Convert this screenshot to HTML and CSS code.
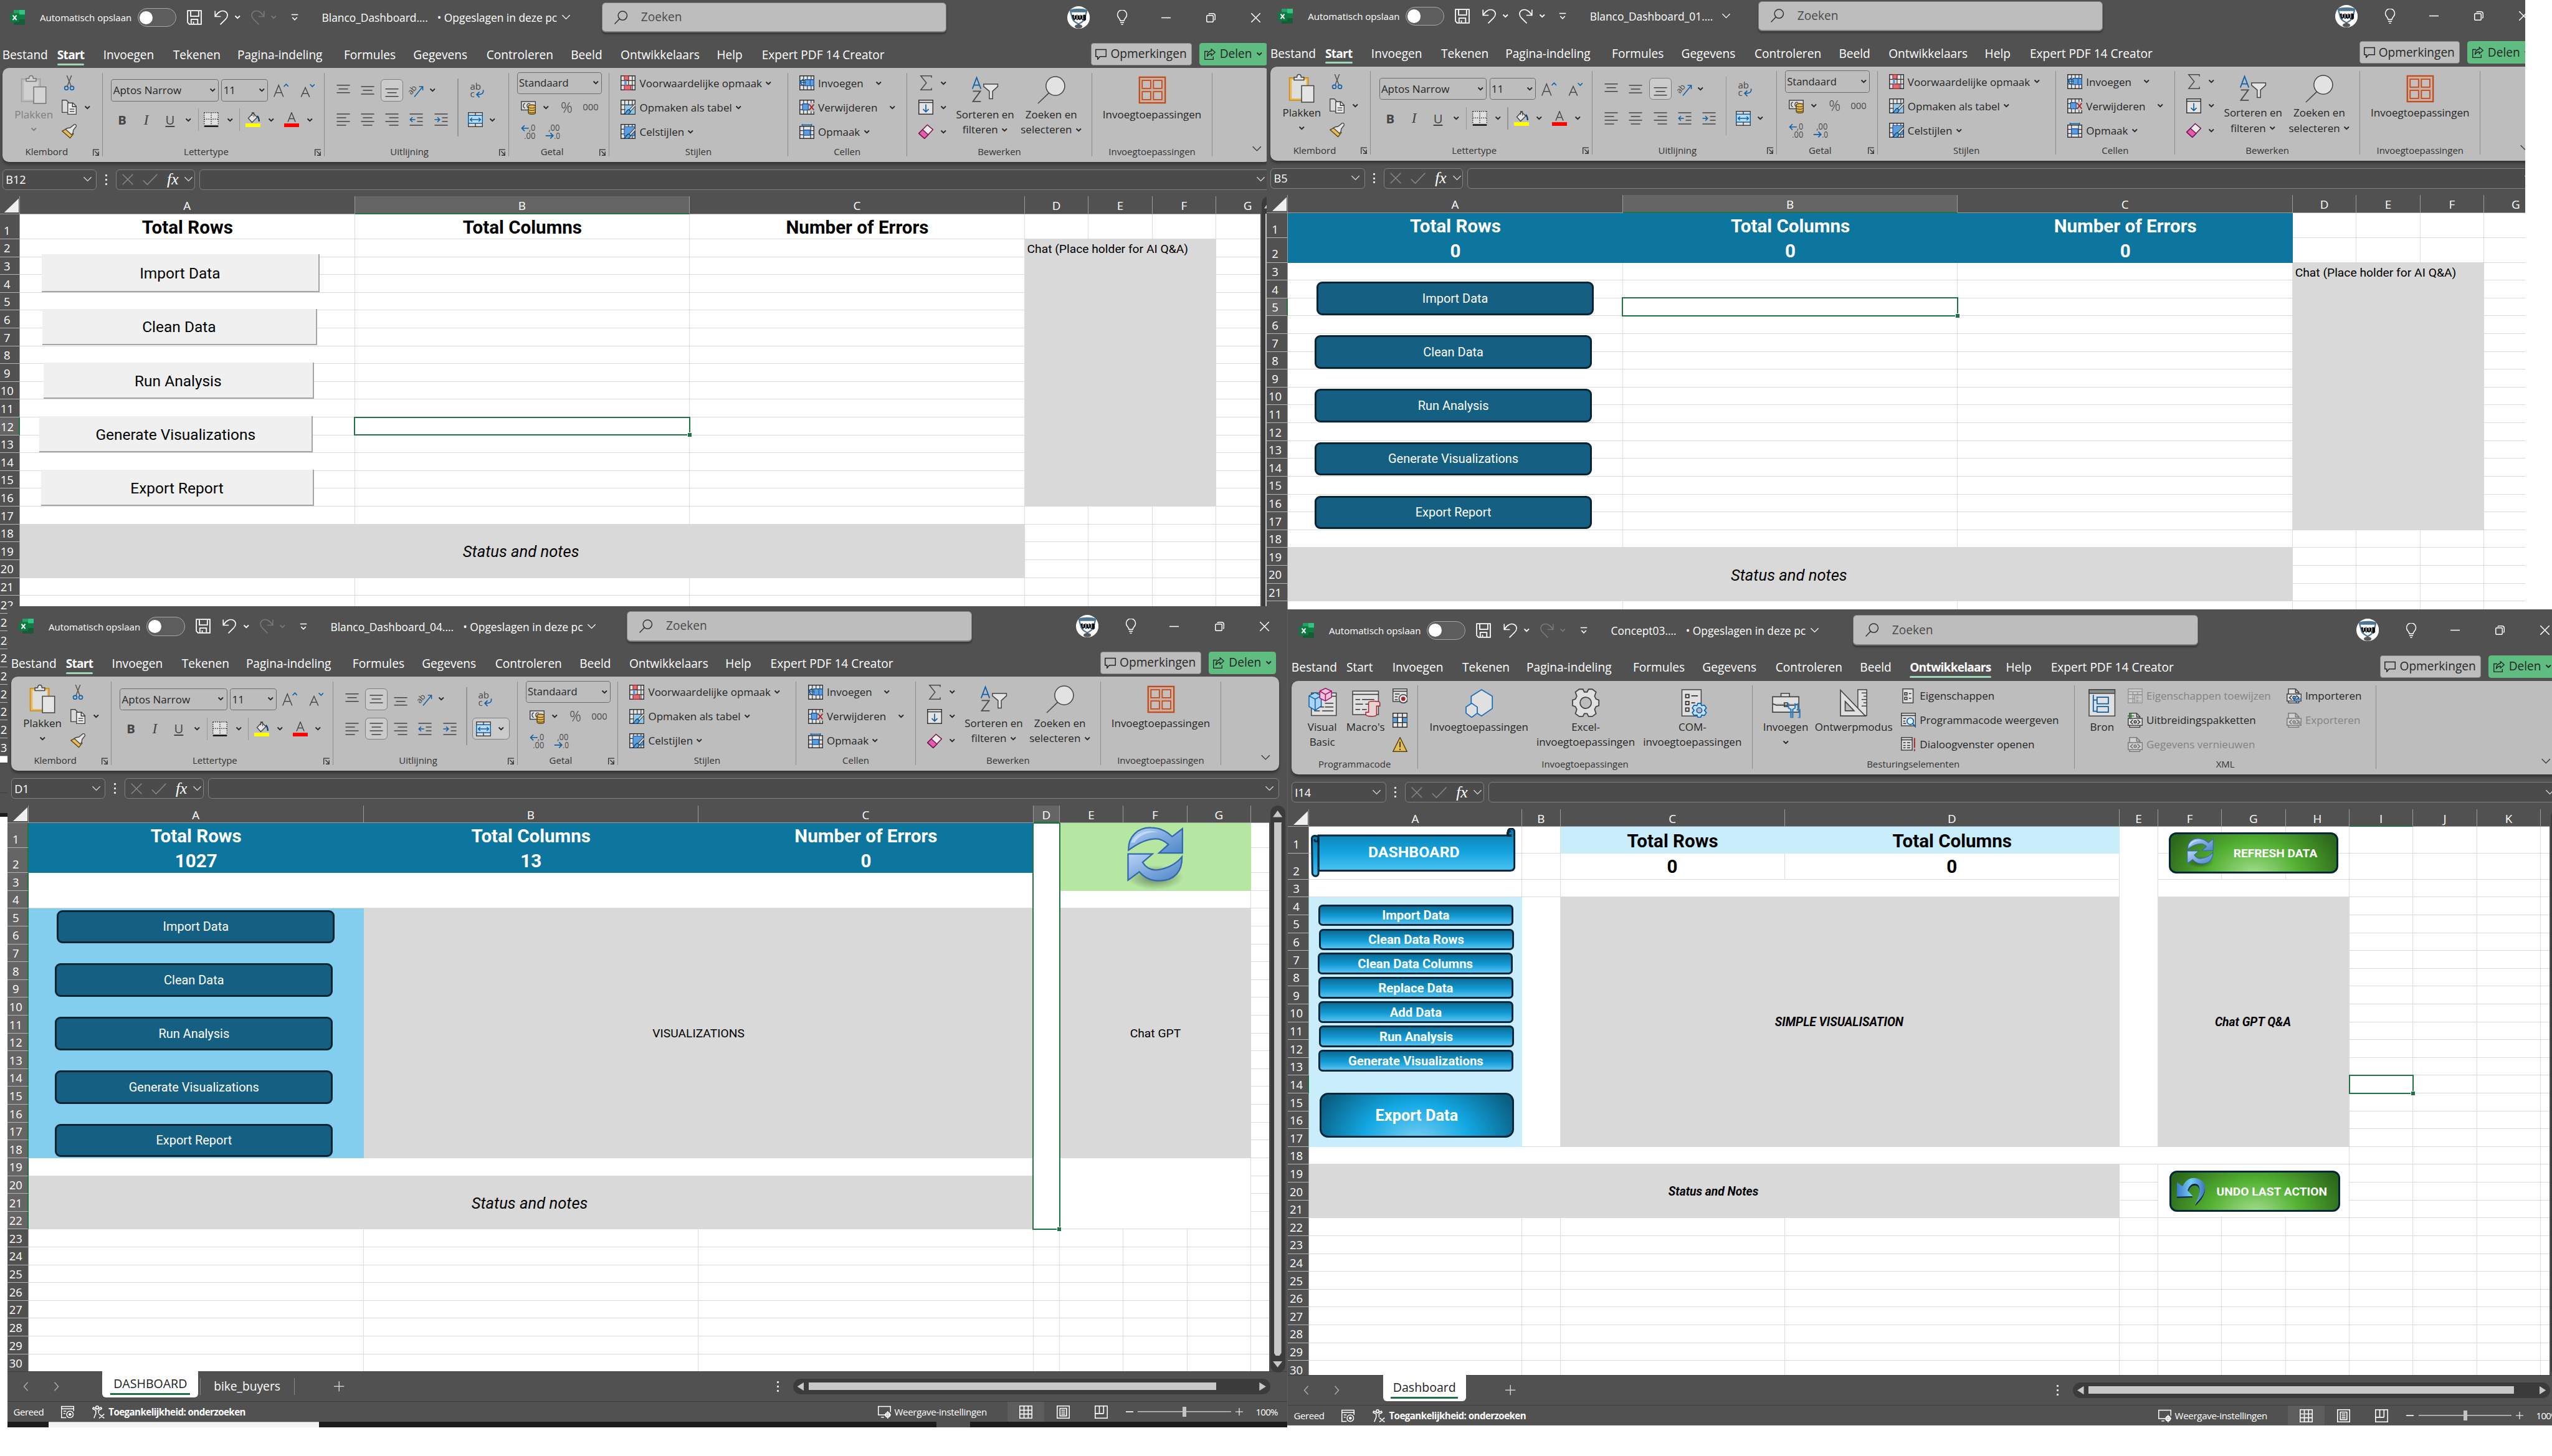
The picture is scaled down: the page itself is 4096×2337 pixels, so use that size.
FILE: index.html
```html
<!DOCTYPE html>
<html lang="nl">
<head>
<meta charset="utf-8">
<title>Dashboards</title>
<link rel="stylesheet" href="styles.css">
</head>
<body>

<svg class="sprites" aria-hidden="true">
  <defs>
    <linearGradient id="g-arrow" x1="0" y1="0" x2="1" y2="1"><stop offset="0" stop-color="#b9d4f6"/><stop offset=".5" stop-color="#7fa9dd"/><stop offset="1" stop-color="#4f86c8"/></linearGradient>
    <linearGradient id="g-undo" x1="0" y1="0" x2="1" y2="0"><stop offset="0" stop-color="#3d79c9"/><stop offset=".5" stop-color="#74cdf7"/><stop offset="1" stop-color="#3f74bd"/></linearGradient>
    <linearGradient id="g-scroll" x1="0" y1="0" x2="0" y2="1"><stop offset="0" stop-color="#0c7aa8"/><stop offset=".55" stop-color="#13a3df"/><stop offset="1" stop-color="#4cc2f1"/></linearGradient>
    <radialGradient id="g-shade"><stop offset="0" stop-color="#000" stop-opacity=".45"/><stop offset="1" stop-color="#000" stop-opacity="0"/></radialGradient>
  </defs>
  <symbol id="excel" viewBox="0 0 32 32"><path fill="#21a366" d="M8 0h24v10H8z"/><path fill="#33c481" d="M20 0h11a1 1 0 0 1 1 1v9H20z"/><path fill="#107c41" d="M8 10h24v10H8z"/><path fill="#185c37" d="M8 20h24v11a1 1 0 0 1-1 1H9a1 1 0 0 1-1-1z"/><rect y="7" width="20" height="19" rx="2" fill="#0f7a40"/><path d="M6 11.500l8 10M14 11.500l-8 10" stroke="#fff" stroke-width="2.600" fill="none"/></symbol>
  <symbol id="save" viewBox="0 0 32 32"><path d="M1.500 1.500h29v29H5l-3.500-4z M8 1.500v12h17v-12 M9 30V20h14v10 M14 30v-5" fill="none" stroke="currentColor" stroke-width="2.400"/></symbol>
  <symbol id="undo" viewBox="0 0 32 32"><path d="M3 2v12h12M3.500 13.500C9 4 17 0 24 3c7 4 7 11 1 17L14 31" fill="none" stroke="currentColor" stroke-width="2.200"/></symbol>
  <symbol id="redo" viewBox="0 0 32 32"><path d="M29 2v12H17M28.500 13.500C23 4 15 0 8 3c-7 4-7 11-1 17l11 11" fill="none" stroke="currentColor" stroke-width="2.200"/></symbol>
  <symbol id="customize" viewBox="0 0 16 16"><path d="M1 2h14M3 8l5 5 5-5" fill="none" stroke="currentColor" stroke-width="2.200"/></symbol>
  <symbol id="chev" viewBox="0 0 14 10"><path d="M2 2l5 5 5-5" fill="none" stroke="currentColor" stroke-width="2.400"/></symbol>
  <symbol id="chevbig" viewBox="0 0 24 16"><path d="M2 2l10 10L22 2" fill="none" stroke="currentColor" stroke-width="2"/></symbol>
  <symbol id="lens" viewBox="0 0 32 32"><circle cx="19" cy="12" r="9.500" fill="none" stroke="currentColor" stroke-width="2"/><path d="M12.500 19L2 30" stroke="currentColor" stroke-width="2"/></symbol>
  <symbol id="avatar" viewBox="0 0 48 48"><circle cx="24" cy="24" r="24" fill="#fff"/><path d="M5 8c10-4 28-4 38 0l-1 5H6z" fill="#4e7590"/><path d="M7 12l4 14c2 6 7 9 13 12 6-3 11-6 13-12l4-14" fill="none" stroke="#4e7590" stroke-width="3"/><path d="M10 19l4-1 3 2 4-2 3 2 4-2 3 2 4-2 5 1v10l-4 3-1-3-3 1-2-3-3 3-3-2-3 2-3-3-3 3-3-3z" fill="#0c0f14"/><path d="M15 17v9M21 19v9M27 17v9M33 19v9" stroke="#fff" stroke-width="1.400"/><ellipse cx="24" cy="43" rx="8" ry="4.500" fill="#111" opacity=".7"/></symbol>
  <symbol id="bulb" viewBox="0 0 32 32"><path d="M12 23c0-5-6-6-6-13a10 10 0 0 1 20 0c0 7-6 8-6 13zM12 27h8M14 31h4" fill="none" stroke="currentColor" stroke-width="2"/></symbol>
  <symbol id="minimize" viewBox="0 0 20 20"><path d="M0 10h20" stroke="currentColor" stroke-width="2"/></symbol>
  <symbol id="restore" viewBox="0 0 20 20"><rect x="1" y="5" width="14" height="14" rx="2" fill="none" stroke="currentColor" stroke-width="2"/><path d="M5 2.500C6 1 7 1 9 1h5c3 0 5 2 5 5v6c0 1 0 2-1.500 3" fill="none" stroke="currentColor" stroke-width="2"/></symbol>
  <symbol id="close" viewBox="0 0 20 20"><path d="M0 0l20 20M20 0L0 20" stroke="currentColor" stroke-width="2"/></symbol>
  <symbol id="comment" viewBox="0 0 24 24"><path d="M1 2h22v15H10l-5 6v-6H1z" fill="none" stroke="currentColor" stroke-width="2"/></symbol>
  <symbol id="share" viewBox="0 0 24 24"><path d="M8 6H1v17h18v-6M15 1l8 7-8 7v-4c-5 0-7 2-9 6 0-7 3-11 9-12z" fill="none" stroke="currentColor" stroke-width="1.800"/></symbol>

  <symbol id="paste" viewBox="0 0 64 64"><path class="clip" d="M6 9h40v48H6z" fill="#e9b955" stroke="#c68a1e" stroke-width="2"/><path d="M11 13h31v40H11z" fill="#dedede"/><path d="M16 14v-6h6c0-8 9-8 9 0h6v6z" fill="#e4e4e4" stroke="#444" stroke-width="2"/><path d="M32 26h26v35H32z" fill="#e4e4e4" stroke="#444" stroke-width="2"/></symbol>
  <symbol id="cut" viewBox="0 0 32 32"><path d="M11 0l9 23M21 0l-9 23" stroke="#555" stroke-width="2" fill="none"/><circle cx="10" cy="27" r="4" fill="none" stroke="#0f5fa8" stroke-width="2.200"/><circle cx="22" cy="27" r="4" fill="none" stroke="#0f5fa8" stroke-width="2.200"/></symbol>
  <symbol id="copy" viewBox="0 0 32 32"><path d="M1 1h9l4 4v22H1z" fill="#dadada" stroke="#444" stroke-width="1.800"/><path d="M13 7h11l7 7v17H13z" fill="#ececec" stroke="#444" stroke-width="1.800"/><path d="M23 7v8h8M17 20h10M17 25h10" fill="none" stroke="#333" stroke-width="1.800"/></symbol>
  <symbol id="brush" viewBox="0 0 32 32"><path d="M1 15l12-6 12 12-7 9z" fill="#e9bd55" stroke="#5a4210" stroke-width="1.800"/><path d="M8 11l4-2 6-1L28 0l4 4-7 9-1 6-3 4z" fill="#e4e4e4" stroke="#444" stroke-width="1.800"/></symbol>
  <symbol id="grow" viewBox="0 0 32 32"><path d="M1 30L11 5l10 25M4.500 21h13" fill="none" stroke="#4a4a4a" stroke-width="2"/><path d="M22 8l5-5 5 5" fill="none" stroke="#0f5fa8" stroke-width="2.200"/></symbol>
  <symbol id="shrink" viewBox="0 0 32 32"><path d="M3 30l9-20 9 20M6 23h12" fill="none" stroke="#4a4a4a" stroke-width="2"/><path d="M22 3l5 5 5-5" fill="none" stroke="#0f5fa8" stroke-width="2.200"/></symbol>
  <symbol id="border" viewBox="0 0 32 32"><path d="M1 1h30v26H1z" fill="#e0e0e0"/><path d="M1 1h30M1 1v27M31 1v27M16 1v27M1 15h30" stroke="#333" stroke-width="2" stroke-dasharray="2 2.500" fill="none"/><path d="M1 30h30" stroke="#000" stroke-width="3"/></symbol>
  <symbol id="bucket" viewBox="0 0 32 32"><path d="M6 13L16 2l9 9-11 11z" fill="#e4e4e4" stroke="#444" stroke-width="1.800"/><path d="M14 8V1h4v9" stroke="#444" stroke-width="1.600" fill="none"/><path d="M25 8c3 3 4 7 4 12" stroke="#0b3d6b" stroke-width="3" fill="none"/><path d="M0 24h32v8H0z" fill="#ff0"/></symbol>
  <symbol id="fontcolor" viewBox="0 0 32 32"><path d="M8 21L16 1l8 20M11 14h10" fill="none" stroke="#4a4a4a" stroke-width="2"/><path d="M0 24h32v8H0z" fill="#f00"/></symbol>
  <symbol id="al-top" viewBox="0 0 32 32"><path d="M2 5h28M6 13h20M2 21h28" stroke="#444" stroke-width="2"/></symbol>
  <symbol id="al-mid" viewBox="0 0 32 32"><path d="M2 8h28M6 16h20M2 24h28" stroke="#444" stroke-width="2"/></symbol>
  <symbol id="al-bot" viewBox="0 0 32 32"><path d="M2 13h28M6 21h20M2 29h28" stroke="#444" stroke-width="2"/></symbol>
  <symbol id="orient" viewBox="0 0 32 32"><text x="-1" y="19" font-size="17" transform="rotate(-50 10 16)" fill="#4a4a4a">ab</text><path d="M12 30L30 8M22 8h8v8" fill="none" stroke="#0f5fa8" stroke-width="2"/></symbol>
  <symbol id="left" viewBox="0 0 32 32"><path d="M2 4h28M2 12h20M2 20h28M2 28h20" stroke="#444" stroke-width="2"/></symbol>
  <symbol id="center" viewBox="0 0 32 32"><path d="M2 4h28M6 12h20M2 20h28M6 28h20" stroke="#444" stroke-width="2"/></symbol>
  <symbol id="right" viewBox="0 0 32 32"><path d="M2 4h28M10 12h20M2 20h28M10 28h20" stroke="#444" stroke-width="2"/></symbol>
  <symbol id="outdent" viewBox="0 0 32 32"><path d="M2 4h28M18 12h12M18 20h12M2 28h28" stroke="#444" stroke-width="2"/><path d="M14 16H3M8 11l-5 5 5 5" fill="none" stroke="#0f5fa8" stroke-width="2"/></symbol>
  <symbol id="indent" viewBox="0 0 32 32"><path d="M2 4h28M18 12h12M18 20h12M2 28h28" stroke="#444" stroke-width="2"/><path d="M2 16h11M8 11l5 5-5 5" fill="none" stroke="#0f5fa8" stroke-width="2"/></symbol>
  <symbol id="wrap" viewBox="0 0 32 32"><text x="2" y="14" font-size="20" fill="#4a4a4a">ab</text><text x="2" y="31" font-size="20" fill="#4a4a4a">c</text><path d="M30 15c1 9-5 10-13 10M22 19l-6 6 6 6" fill="none" stroke="#0f5fa8" stroke-width="2.200"/></symbol>
  <symbol id="merge" viewBox="0 0 32 32"><path d="M1 1h30v30H1z" fill="#e0e0e0" stroke="#444" stroke-width="2"/><path d="M1 7h30v17H1z" fill="#b9dcf5" stroke="#0f5fa8" stroke-width="2"/><path d="M16 1v6M16 24v7" stroke="#444" stroke-width="2"/><path d="M5 16h22M9 12l-4 4 4 4M23 12l4 4-4 4" fill="none" stroke="#0f5fa8" stroke-width="2"/></symbol>
  <symbol id="money" viewBox="0 0 32 32"><path d="M1 4h30v18H1z" fill="#dedede" stroke="#444" stroke-width="2"/><path d="M9 8c-5 1-5 9 0 10M20 9c-4-2-7 0-7 4s3 6 7 4" fill="none" stroke="#444" stroke-width="1.800"/><path d="M16 14c0-4 15-4 15 0v14c0 4-15 4-15 0z" fill="#e9bd55" stroke="#5a4210" stroke-width="1.800"/><path d="M16 15c0 4 15 4 15 0M16 20c0 4 15 4 15 0M16 25c0 4 15 4 15 0" fill="none" stroke="#5a4210" stroke-width="1.500"/></symbol>
  <symbol id="thousand" viewBox="0 0 32 32"><text x="-1" y="22" font-size="19.500" textLength="34" lengthAdjust="spacingAndGlyphs" fill="#4a4a4a">000</text></symbol>
  <symbol id="incdec" viewBox="0 0 32 32"><text x="17" y="15" font-size="18" textLength="14" lengthAdjust="spacingAndGlyphs" fill="#4a4a4a">,0</text><text x="7" y="32" font-size="18" textLength="24" lengthAdjust="spacingAndGlyphs" fill="#4a4a4a">,00</text><path d="M17 9H2M8 3L2 9l6 6" fill="none" stroke="#0f5fa8" stroke-width="2.200"/></symbol>
  <symbol id="decdec" viewBox="0 0 32 32"><text x="7" y="14" font-size="18" textLength="24" lengthAdjust="spacingAndGlyphs" fill="#4a4a4a">,00</text><text x="19" y="32" font-size="18" textLength="13" lengthAdjust="spacingAndGlyphs" fill="#4a4a4a">,0</text><path d="M1 25h16M11 19l6 6-6 6" fill="none" stroke="#0f5fa8" stroke-width="2.200"/></symbol>
  <symbol id="gridbase" viewBox="0 0 32 32"><path d="M1 1h30v30H1z" fill="#e4e4e4" stroke="#333" stroke-width="2"/><path d="M1 11h30M1 21h30M9 1v30M17 1v30M25 1v30" stroke="#333" stroke-width="1.600"/></symbol>
  <symbol id="cond" viewBox="0 0 32 32"><use href="#gridbase" width="32" height="32"/><path d="M8 1h9v9H8zM8 21h14v10H8z" fill="#e36a72" stroke="#9c2a30" stroke-width="1.600"/><path d="M8 11h5v10H8z" fill="#5b9bd5"/></symbol>
  <symbol id="fmttable" viewBox="0 0 32 32"><use href="#gridbase" width="32" height="32"/><path d="M10 12h20v18H10z" fill="#8cc8ef"/><path d="M31 8L18 22l3 3L32 13z" fill="#e4e4e4" stroke="#444" stroke-width="1.500"/><path d="M18 21c-6 0-4 7-10 9 6 3 13 0 13-5z" fill="#5aa0dd" stroke="#0b3d6b" stroke-width="1.600"/></symbol>
  <symbol id="cellstyle" viewBox="0 0 32 32"><use href="#gridbase" width="32" height="32"/><path d="M8 6h22v19H8z" fill="#5b9fdc" stroke="#2255a4" stroke-width="1.600"/><path d="M31 8L18 22l3 3L32 13z" fill="#e4e4e4" stroke="#444" stroke-width="1.500"/><path d="M18 21c-6 0-4 7-10 9 6 3 13 0 13-5z" fill="#5aa0dd" stroke="#0b3d6b" stroke-width="1.600"/></symbol>
  <symbol id="insert" viewBox="0 0 32 32"><use href="#gridbase" width="32" height="32"/><path d="M12 9h19v13H12z" fill="#5b9fdc" stroke="#2255a4" stroke-width="1.800"/><path d="M23 9v13" stroke="#2255a4" stroke-width="1.600"/><path d="M14 15H1M8 8l-7 7 7 7" fill="none" stroke="#0f5fa8" stroke-width="2.400"/></symbol>
  <symbol id="delete" viewBox="0 0 32 32"><use href="#gridbase" width="32" height="32"/><path d="M21 7h11v18H21z" fill="#bdbdbd"/><path d="M7 9h12v13H7z" fill="#5b9fdc" stroke="#2255a4" stroke-width="1.800"/><path d="M21 10l10 12M31 10L21 22" stroke="#a4262c" stroke-width="2.400"/></symbol>
  <symbol id="format" viewBox="0 0 32 32"><path d="M1 5h30v26H1z" fill="#e4e4e4" stroke="#333" stroke-width="2"/><path d="M1 14h30M1 23h30M9 5v26M24 5v26" stroke="#333" stroke-width="1.600"/><path d="M9 13h14v11H9z" fill="#5b9fdc" stroke="#2255a4" stroke-width="1.800"/><path d="M6 2h20M6-1v6M26-1v6" stroke="#0f5fa8" stroke-width="2"/></symbol>
  <symbol id="sigma" viewBox="0 0 32 32"><path d="M28 5V1H5l12 15L5 31h23v-4" fill="none" stroke="#4a4a4a" stroke-width="2"/></symbol>
  <symbol id="filldown" viewBox="0 0 32 32"><path d="M1 1h30v30H1z" fill="#e4e4e4" stroke="#333" stroke-width="2"/><path d="M1 6h30" stroke="#333" stroke-width="2"/><path d="M16 10v16M10 20l6 6 6-6" fill="none" stroke="#0f5fa8" stroke-width="2.200"/></symbol>
  <symbol id="eraser" viewBox="0 0 32 32"><path d="M1 20L19 2l12 10-18 19z" fill="#ededed" stroke="#7c1450" stroke-width="2"/><path d="M1 20l8-8 12 11-8 8z" fill="#df5fae" stroke="#7c1450" stroke-width="2"/></symbol>
  <symbol id="sort" viewBox="0 0 64 64"><path d="M5 30l9-24 9 24M8 22h12" fill="none" stroke="#0f5fa8" stroke-width="2.400"/><path d="M6 35h16L6 57h17" fill="none" stroke="#4a4a4a" stroke-width="2.400"/><path d="M29 20h30v5L48 35v16h-7V35L29 25z" fill="#e4e4e4" stroke="#444" stroke-width="2"/></symbol>
  <symbol id="find" viewBox="0 0 64 64"><circle cx="41" cy="24" r="20" fill="#e2e2e2" stroke="#444" stroke-width="2"/><path d="M27 39L4 61" stroke="#444" stroke-width="2"/></symbol>
  <symbol id="addins" viewBox="0 0 64 64"><path d="M5 5h55v55H5z" fill="#c9b0a4" stroke="#c24a1c" stroke-width="3"/><path d="M11 12h18v17H11zM35 12h18v17H35zM11 36h18v17H11zM35 36h18v17H35z" fill="#c6beba" stroke="#c24a1c" stroke-width="2.400"/></symbol>
  <symbol id="launch" viewBox="0 0 16 16"><path d="M1 16V1h14M5 5l9 9M14 6v9H6" fill="none" stroke="#333" stroke-width="2"/></symbol>

  <symbol id="vb" viewBox="0 0 64 64"><path d="M9 11h53v48H9z" fill="#e0e0e0" stroke="#444" stroke-width="2"/><path d="M9 18h53M38 33h18M38 41h18M15 49h12M32 49h24M28 41h8" stroke="#333" stroke-width="2"/><path d="M4 17l13-7 13 7v22l-13 9-13-8z" fill="#a9d4f3" stroke="#0f5fa8" stroke-width="2"/><path d="M4 17l13 7 13-7M17 24v23" fill="none" stroke="#0f5fa8" stroke-width="2"/><path d="M27 7l12-6 13 6v13l-13 8-12-6z" fill="#ecc3db" stroke="#a0156a" stroke-width="2"/><path d="M27 7l12 7 13-7M39 14v13" fill="none" stroke="#a0156a" stroke-width="2"/></symbol>
  <symbol id="macros" viewBox="0 0 64 64"><path d="M4 7h55v50H4z" fill="#e0e0e0" stroke="#444" stroke-width="2"/><path d="M4 14h55M10 25h10M24 25h26M10 35h16M31 35h8M10 46h10M24 46h10" stroke="#333" stroke-width="2"/><path d="M38 31c0-3 24-4 24 1v7h-7v18c0 5-22 5-23 0v-5h6z" fill="#ecd2d0" stroke="#a4262c" stroke-width="2"/></symbol>
  <symbol id="record" viewBox="0 0 32 32"><path d="M1 1h30v27H1z" fill="#e0e0e0" stroke="#444" stroke-width="2"/><path d="M1 6h30M5 12h10M5 18h6M5 24h6" stroke="#333" stroke-width="2"/><circle cx="23" cy="22" r="9" fill="#ececec" stroke="#444" stroke-width="2"/><circle cx="23" cy="22" r="4.500" fill="#a4262c"/></symbol>
  <symbol id="relref" viewBox="0 0 32 32"><path d="M1 1h30v30H1z" fill="#e8e8e8" stroke="#333" stroke-width="2"/><path d="M1 10h30v11H1z" fill="#5b9fdc"/><path d="M11 10h10v11H11z" fill="#fff"/><path d="M1 10h30M1 21h30M11 1v30M21 1v30" stroke="#333" stroke-width="2"/></symbol>
  <symbol id="warn" viewBox="0 0 32 32"><path d="M16 1l15 30H1z" fill="#e9bd55" stroke="#5a4210" stroke-width="2"/><path d="M16 10v12M16 25v3" stroke="#333" stroke-width="2.400"/></symbol>
  <symbol id="hexes" viewBox="0 0 64 64"><path d="M15 18L37 4l23 14v26L37 60 15 46z" fill="#e0e0e0" stroke="#1d6fbb" stroke-width="2.400"/><path d="M4 41l12-8 12 8v13l-12 9-12-9z" fill="#e0e0e0" stroke="#1d6fbb" stroke-width="2.400"/></symbol>
  <symbol id="gear" viewBox="0 0 64 64"><path d="M18 3h8l3 6h6l3-6h8l8 6-3 9 3 6 6 2v12l-6 2-3 6 3 9-8 6h-8l-3-6h-6l-3 6h-8l-8-6 3-9-3-6-6-2V26l6-2 3-6-3-9z" fill="#e0e0e0" stroke="#444" stroke-width="2.400"/><circle cx="32" cy="32" r="12" fill="#bdbdbd" stroke="#444" stroke-width="2.400"/></symbol>
  <symbol id="com" viewBox="0 0 64 64"><path d="M10 4h41v56H10z" fill="#e0e0e0" stroke="#444" stroke-width="2"/><path d="M18 14h7v7h-7zM18 29h7v7h-7zM18 43h7v7h-7zM30 17h14M30 32h8" fill="none" stroke="#333" stroke-width="2.400"/><path d="M44 33h6l2 5 6-1 4 6-4 5 4 5-4 6-6-1-2 5h-6l-2-5-6 1-4-6 4-5-4-5 4-6 6 1z" fill="#bfe0f5" stroke="#0f5fa8" stroke-width="2.200"/><circle cx="47" cy="48" r="5.500" fill="#bdbdbd" stroke="#0f5fa8" stroke-width="2.200"/></symbol>
  <symbol id="toolbox" viewBox="0 0 64 64"><path d="M4 19h56v33H4zM22 19v-7h18v7M4 34l8 3h40l8-3M29 32h7v8h-7z" fill="#e0e0e0" stroke="#444" stroke-width="2.200"/><path d="M38 33v10l5 3v18h4V46l5-3V33M58 33v14M55 47h7v17h-4" fill="none" stroke="#2d7fc4" stroke-width="3"/></symbol>
  <symbol id="ruler" viewBox="0 0 64 64"><path d="M41 4h19v55H41z" fill="#e0e0e0" stroke="#444" stroke-width="2"/><path d="M60 11H49M60 18h-7M60 25H49M60 32h-7M60 39H49" stroke="#444" stroke-width="2"/><path d="M4 5v55h53z" fill="#e0e0e0" stroke="#444" stroke-width="2.200"/><path d="M14 29v20h19z" fill="#bdbdbd" stroke="#444" stroke-width="2.200"/></symbol>
  <symbol id="props" viewBox="0 0 32 32"><path d="M4 1h22v30H4z" fill="#e0e0e0" stroke="#444" stroke-width="2"/><path d="M8 9h5v5H8zM8 19h5v5H8zM17 11h5M17 21h5" fill="none" stroke="#333" stroke-width="2"/></symbol>
  <symbol id="viewcode" viewBox="0 0 32 32"><path d="M1 1h30v27H1z" fill="#e0e0e0" stroke="#444" stroke-width="2"/><path d="M1 6h30M5 12h6M5 18h4M5 23h6" stroke="#333" stroke-width="2"/><circle cx="20" cy="18" r="7" fill="#dff0fb" stroke="#0f5fa8" stroke-width="2.200"/><path d="M25 23l7 8" stroke="#0f5fa8" stroke-width="2.600"/></symbol>
  <symbol id="dialog" viewBox="0 0 32 32"><path d="M1 1h23v27H1z" fill="#e0e0e0" stroke="#444" stroke-width="2"/><path d="M1 6h23M5 12h5M13 12h7M5 18h5M13 18h7M5 23h5M13 23h7" stroke="#333" stroke-width="2"/><path d="M29 2v21M29 26v4" stroke="#a4262c" stroke-width="2.600"/></symbol>
  <symbol id="source" viewBox="0 0 64 64"><path d="M4 4h55v56H4z" fill="#e0e0e0" stroke="#444" stroke-width="2"/><path d="M4 4h55v8H4z" fill="#8b8b8b" stroke="#444" stroke-width="2"/><path d="M13 15v35h8M13 26h8M21 20h24v14H21zM21 40h24v12H21z" fill="none" stroke="#0f5fa8" stroke-width="2.400"/></symbol>
  <symbol id="mapprops" viewBox="0 0 32 32"><path d="M1 1h30v30H1z" fill="#dcdcdc" stroke="#777" stroke-width="2"/><path d="M1 7h30M1 13h30M1 22h14M11 7v24M21 7v6" stroke="#777" stroke-width="2"/><path d="M15 14h16v17H15z" fill="#d6d6d6" stroke="#777" stroke-width="2"/><path d="M19 18h3v3h-3zM19 25h3v3h-3zM25 20h3M25 27h3" stroke="#777" fill="none" stroke-width="1.500"/></symbol>
  <symbol id="xmldoc" viewBox="0 0 32 32"><path d="M4 12V1h15l7 7v4M19 1v8h7M4 28v3h22v-3" fill="#e0e0e0" stroke="#444" stroke-width="2"/><path d="M1 12h30v15H1z" fill="#e0e0e0" stroke="#444" stroke-width="2"/><path d="M11 15l-5 5 5 4M21 15l5 5-5 4" fill="none" stroke="#333" stroke-width="2"/><circle cx="16" cy="19.500" r="2.500" fill="none" stroke="#333" stroke-width="2"/></symbol>
  <symbol id="expansion" viewBox="0 0 32 32"><use href="#xmldoc" width="32" height="32"/><path d="M7 0v14M0 7h14" stroke="#1a7a1a" stroke-width="2.200"/></symbol>
  <symbol id="import" viewBox="0 0 32 32"><use href="#xmldoc" width="32" height="32"/><path d="M32 23H15M22 16l-7 7 7 7" fill="none" stroke="#1d6fbb" stroke-width="2.600"/></symbol>
  <symbol id="export" viewBox="0 0 32 32"><use href="#xmldoc" width="32" height="32"/><path d="M14 23h17M24 16l7 7-7 7" fill="none" stroke="#777" stroke-width="2.600"/></symbol>

  <symbol id="xmark" viewBox="0 0 24 24"><path d="M1 1l22 22M23 1L1 23" stroke="currentColor" stroke-width="1.800"/></symbol>
  <symbol id="check" viewBox="0 0 32 24"><path d="M1 14l9 9L31 1" fill="none" stroke="currentColor" stroke-width="1.800"/></symbol>
  <symbol id="prev" viewBox="0 0 12 20"><path d="M10 1L2 10l8 9" fill="none" stroke="currentColor" stroke-width="2"/></symbol>
  <symbol id="next" viewBox="0 0 12 20"><path d="M2 1l8 9-8 9" fill="none" stroke="currentColor" stroke-width="2"/></symbol>
  <symbol id="plus" viewBox="0 0 22 22"><path d="M11 0v22M0 11h22" stroke="currentColor" stroke-width="2"/></symbol>
  <symbol id="macrorec" viewBox="0 0 28 28"><path d="M1 2h26v5H1zM1 7v19h10M27 7v5M5 12h6M5 17h4" fill="none" stroke="currentColor" stroke-width="2"/><circle cx="19" cy="19" r="7" fill="none" stroke="currentColor" stroke-width="2"/><circle cx="19" cy="19" r="3" fill="currentColor"/></symbol>
  <symbol id="access" viewBox="0 0 28 28"><circle cx="12" cy="4" r="3" fill="none" stroke="currentColor" stroke-width="2"/><path d="M2 7l7 3v7L5 27M22 7l-7 3v7M2 7l2-3 8 4 8-4 2 3M16 18l11 9M27 18l-11 9" fill="none" stroke="currentColor" stroke-width="2"/></symbol>
  <symbol id="viewset" viewBox="0 0 28 28"><path d="M14 20H1V2h26v12M7 25h6" fill="none" stroke="currentColor" stroke-width="2"/><circle cx="21" cy="20" r="4.500" fill="none" stroke="currentColor" stroke-width="3"/><path d="M21 12v16M13 20h15" stroke="currentColor" stroke-width="2"/></symbol>
  <symbol id="v-normal" viewBox="0 0 28 28"><path d="M1 1h26v26H1zM1 10h26M1 18h26M10 1v26M19 1v26" fill="none" stroke="currentColor" stroke-width="2.200"/></symbol>
  <symbol id="v-page" viewBox="0 0 28 28"><path d="M1 1h26v26H1zM7 6h14v16H7zM10 10h8M10 14h8M10 18h8" fill="none" stroke="currentColor" stroke-width="2.200"/></symbol>
  <symbol id="v-break" viewBox="0 0 28 28"><path d="M1 1h26v26H1zM10 1v16M19 1v16M1 17h18" fill="none" stroke="currentColor" stroke-width="2.200"/></symbol>

  <symbol id="refresh" viewBox="0 0 120 136"><ellipse cx="60" cy="108" rx="60" ry="26" fill="url(#g-shade)"/><g fill="url(#g-arrow)" stroke="#3468ad" stroke-width="3"><path d="M3 50C2 20 24 1 52 2c17 0 32 7 44 19L118 4v52H68l20-18c-9-9-19-14-32-12C36 28 20 38 3 50z"/><path d="M117 64c1 32-17 50-46 51-17 1-33-5-45-19L2 114V58h52L33 76c7 11 17 17 30 16 20-2 42-12 54-28z"/></g><path d="M8 34C18 12 46 4 66 12c-24-2-42 8-50 22z" fill="#dcebff" opacity=".6"/></symbol>
  <symbol id="undo3d" viewBox="0 0 62 60"><path d="M0 10l12 9C20 2 34-2 46 3c18 8 22 30-8 57C50 40 52 20 42 16c-9-3-16 4-18 14l10 11L0 42z" fill="#0b2440" transform="translate(0 1.500)"/><path d="M0 10l12 9C20 2 34-2 46 3c18 8 22 28-8 54C50 38 52 18 42 14c-9-3-17 4-19 14l11 12L0 41z" fill="url(#g-undo)"/></symbol>
  <symbol id="banner" viewBox="0 0 436 106"><path d="M16 16H420V8c0-9 14-9 14 0v74c0 6-4 9-10 9H16z" fill="url(#g-scroll)" stroke="#04263a" stroke-width="4"/><path d="M420 16c-2-8 2-10 6-8M420 16h8" fill="none" stroke="#04263a" stroke-width="5"/><path d="M2 22c0-7 14-7 14 0v74c0 9-12 9-13 0z" fill="url(#g-scroll)" stroke="#04263a" stroke-width="4"/><path d="M16 22c-1 9-9 9-8 2" fill="none" stroke="#04263a" stroke-width="4"/></symbol>
</svg>

<template id="t-quick">
  <svg class="excel"><use href="#excel"/></svg>
  <span class="autosave">Automatisch opslaan</span>
  <span class="toggle"></span>
  <svg class="i32 save"><use href="#save"/></svg>
  <svg class="i32 undo"><use href="#undo"/></svg>
  <span class="cell w38"><svg class="chev"><use href="#chev"/></svg></span>
  <svg class="i32 redo"><use href="#redo"/></svg>
  <span class="cell w36 redo-chev"><svg class="chev"><use href="#chev"/></svg></span>
  <span class="cell w52"><svg class="i16"><use href="#customize"/></svg></span>
</template>

<template id="t-controls">
  <svg class="avatar"><use href="#avatar"/></svg>
  <span class="cell bulb"><svg class="i32"><use href="#bulb"/></svg></span>
  <span class="cell wc"><svg class="i20"><use href="#minimize"/></svg></span>
  <span class="cell wc"><svg class="i20"><use href="#restore"/></svg></span>
  <span class="cell wc"><svg class="i20"><use href="#close"/></svg></span>
</template>

<template id="t-tabs">
  <nav class="tabs">
    <a>Bestand</a><a>Start</a><a>Invoegen</a><a>Tekenen</a><a>Pagina-indeling</a><a>Formules</a><a>Gegevens</a><a>Controleren</a><a>Beeld</a><a>Ontwikkelaars</a><a>Help</a><a>Expert PDF 14 Creator</a>
  </nav>
  <button class="comments"><svg class="i24"><use href="#comment"/></svg>Opmerkingen</button>
  <button class="share"><svg class="i24"><use href="#share"/></svg>Delen<svg class="chev"><use href="#chev"/></svg></button>
</template>

<template id="t-home">
  <div class="group g-clip">
    <div class="body">
      <div class="large paste"><svg><use href="#paste"/></svg>Plakken<svg class="chev"><use href="#chev"/></svg></div>
      <div class="stack3">
        <div><span class="cell w29"><svg class="i32"><use href="#cut"/></svg></span></div>
        <div><span class="cell w29"><svg class="i32"><use href="#copy"/></svg></span><span class="cell w48"><svg class="chev"><use href="#chev"/></svg></span></div>
        <div><span class="cell w29"><svg class="i32"><use href="#brush"/></svg></span></div>
      </div>
    </div>
    <div class="label">Klembord<svg><use href="#launch"/></svg></div>
  </div>
  <div class="group g-font">
    <div class="body">
      <div class="stack2">
        <div class="pickers"><span class="select face">Aptos Narrow<svg class="chev"><use href="#chev"/></svg></span><span class="select size">11<svg class="chev"><use href="#chev"/></svg></span><span class="cell w56"><svg class="i32"><use href="#grow"/></svg></span><span class="cell w56"><svg class="i32"><use href="#shrink"/></svg></span></div>
        <div class="marks"><b class="cell w51">B</b><i class="cell w51">I</i><u class="cell w51">U</u><span class="cell w27"><svg class="chev"><use href="#chev"/></svg></span><span class="bar first"></span><span class="cell w54"><svg class="i32"><use href="#border"/></svg></span><span class="cell w24"><svg class="chev"><use href="#chev"/></svg></span><span class="bar"></span><span class="cell w56"><svg class="i32"><use href="#bucket"/></svg></span><span class="cell w20"><svg class="chev"><use href="#chev"/></svg></span><span class="cell w56 fc"><svg class="i32"><use href="#fontcolor"/></svg></span><span class="cell w20"><svg class="chev"><use href="#chev"/></svg></span></div>
      </div>
    </div>
    <div class="label">Lettertype<svg><use href="#launch"/></svg></div>
  </div>
  <div class="group g-align">
    <div class="body">
      <div class="stack2 aligns">
        <div><span class="cell w52"><svg class="i32"><use href="#al-top"/></svg></span><span class="cell w52 v-mid"><svg class="i32"><use href="#al-mid"/></svg></span><span class="cell w52 v-bot"><svg class="i32"><use href="#al-bot"/></svg></span><span class="cell w52"><svg class="i32"><use href="#orient"/></svg></span><span class="cell w16"><svg class="chev"><use href="#chev"/></svg></span></div>
        <div><span class="cell w52"><svg class="i32"><use href="#left"/></svg></span><span class="cell w52 h-mid"><svg class="i32"><use href="#center"/></svg></span><span class="cell w52"><svg class="i32"><use href="#right"/></svg></span><span class="cell w52"><svg class="i32"><use href="#outdent"/></svg></span><span class="cell w52"><svg class="i32"><use href="#indent"/></svg></span></div>
      </div>
      <span class="divider"></span>
      <div class="stack2 merges">
        <div><span class="cell w54"><svg class="i32"><use href="#wrap"/></svg></span></div>
        <div><span class="cell merge"><svg class="i32"><use href="#merge"/></svg><svg class="chev"><use href="#chev"/></svg></span></div>
      </div>
    </div>
    <div class="label">Uitlijning<svg><use href="#launch"/></svg></div>
  </div>
  <div class="group g-number">
    <div class="body">
      <div class="stack3">
        <div><span class="select kind">Standaard<svg class="chev"><use href="#chev"/></svg></span></div>
        <div><span class="cell w48"><svg class="i32"><use href="#money"/></svg></span><span class="cell w28"><svg class="chev"><use href="#chev"/></svg></span><span class="cell w60 percent">%</span><span class="cell w42"><svg class="i32"><use href="#thousand"/></svg></span></div>
        <div><span class="cell w48"><svg class="i32"><use href="#incdec"/></svg></span><span class="cell w56"><svg class="i32"><use href="#decdec"/></svg></span></div>
      </div>
    </div>
    <div class="label">Getal<svg><use href="#launch"/></svg></div>
  </div>
  <div class="group g-styles">
    <div class="body">
      <div class="stack3 list">
        <div><svg class="i32"><use href="#cond"/></svg>Voorwaardelijke opmaak<svg class="chev"><use href="#chev"/></svg></div>
        <div><svg class="i32"><use href="#fmttable"/></svg>Opmaken als tabel<svg class="chev"><use href="#chev"/></svg></div>
        <div><svg class="i32"><use href="#cellstyle"/></svg>Celstijlen<svg class="chev"><use href="#chev"/></svg></div>
      </div>
    </div>
    <div class="label">Stijlen</div>
  </div>
  <div class="group g-cells">
    <div class="body">
      <div class="stack3 list">
        <div class="split"><svg class="i32"><use href="#insert"/></svg>Invoegen<svg class="chev"><use href="#chev"/></svg></div>
        <div class="split"><svg class="i32"><use href="#delete"/></svg>Verwijderen<svg class="chev"><use href="#chev"/></svg></div>
        <div><svg class="i32"><use href="#format"/></svg>Opmaak<svg class="chev"><use href="#chev"/></svg></div>
      </div>
    </div>
    <div class="label">Cellen</div>
  </div>
  <div class="group g-edit">
    <div class="body">
      <div class="stack3">
        <div><span class="cell w54"><svg class="i32"><use href="#sigma"/></svg></span><span class="cell w20"><svg class="chev"><use href="#chev"/></svg></span></div>
        <div><span class="cell w54"><svg class="i32"><use href="#filldown"/></svg></span><span class="cell w20"><svg class="chev"><use href="#chev"/></svg></span></div>
        <div><span class="cell w54"><svg class="i32"><use href="#eraser"/></svg></span><span class="cell w20"><svg class="chev"><use href="#chev"/></svg></span></div>
      </div>
      <div class="large sort"><svg><use href="#sort"/></svg>Sorteren en<span>filteren <svg class="chev"><use href="#chev"/></svg></span></div>
      <div class="large find"><svg><use href="#find"/></svg>Zoeken en<span>selecteren <svg class="chev"><use href="#chev"/></svg></span></div>
    </div>
    <div class="label">Bewerken</div>
  </div>
  <div class="group g-addins">
    <div class="body"><div class="large"><svg><use href="#addins"/></svg>Invoegtoepassingen</div></div>
    <div class="label">Invoegtoepassingen</div>
  </div>
  <svg class="collapse"><use href="#chevbig"/></svg>
</template>

<template id="t-formula">
  <span class="dots"><i></i><i></i><i></i></span>
  <span class="fx"><span class="cell w48 dim"><svg class="i24"><use href="#xmark"/></svg></span><span class="cell w48 dim"><svg class="tick"><use href="#check"/></svg></span><em class="cell w48">fx</em><span class="cell w20"><svg class="mid"><use href="#chevbig"/></svg></span></span>
  <span class="entry"><svg class="mid"><use href="#chevbig"/></svg></span>
</template>

<template id="t-status">
  <span class="ready">Gereed</span>
  <svg class="i28 rec"><use href="#macrorec"/></svg>
  <svg class="i28 acc"><use href="#access"/></svg>
  <b>Toegankelijkheid: onderzoeken</b>
  <svg class="i28 vset"><use href="#viewset"/></svg>
  <span class="vtext">Weergave-instellingen</span>
  <span class="cell view on"><svg class="i28"><use href="#v-normal"/></svg></span>
  <span class="cell view"><svg class="i28"><use href="#v-page"/></svg></span>
  <span class="cell view"><svg class="i28"><use href="#v-break"/></svg></span>
  <span class="minus"></span>
  <span class="slider"></span>
  <svg class="zoomin"><use href="#plus"/></svg>
  <span class="pct">100%</span>
</template>

<main class="desktop">

  <section class="window win-1" data-tab="Start">
    <header class="titlebar"><div class="quick" data-use="t-quick"></div>
      <div class="doc"><span>Blanco_Dashboard....</span><span class="where">• Opgeslagen in deze pc</span><svg class="mid"><use href="#chevbig"/></svg></div>
      <div class="search"><svg class="i32"><use href="#lens"/></svg>Zoeken</div><div class="controls" data-use="t-controls"></div></header>
    <div class="tabrow" data-use="t-tabs"></div>
    <div class="ribbon paste-off" data-use="t-home"></div>
    <div class="formula"><span class="name">B12<svg class="mid"><use href="#chevbig"/></svg></span><span data-use="t-formula"></span></div>
    <div class="work">
      <div class="sheet" data-cols="A:714 B:714 C:714 D:136 E:136 F:136 G:136" data-tall="53" data-col="B" data-rows="12-12">
        <div class="range h1" data-ref="A1:A1">Total Rows</div>
        <div class="range h1" data-ref="B1:B1">Total Columns</div>
        <div class="range h1" data-ref="C1:C1">Number of Errors</div>
        <div class="range gray chat" data-ref="D2:F16">Chat (Place holder for AI Q&amp;A)</div>
        <div class="range gray notes" data-ref="A18:C20">Status and notes</div>
        <div class="cursor" data-ref="B12:B12"></div>
        <div class="shapes plain"><button>Import Data</button><button>Clean Data</button><button>Run Analysis</button><button>Generate Visualizations</button><button>Export Report</button></div>
      </div>
      <div class="vscroll"></div>
    </div>
    <div class="sheettabs"></div>
    <footer class="status"></footer>
    <div class="taskbar"></div>
  </section>

  <section class="window win-2" data-tab="Start">
    <header class="titlebar"><div class="quick" data-use="t-quick"></div>
      <div class="doc"><span>Blanco_Dashboard_01....</span><svg class="mid far"><use href="#chevbig"/></svg></div>
      <div class="search"><svg class="i32"><use href="#lens"/></svg>Zoeken</div><div class="controls" data-use="t-controls"></div></header>
    <div class="tabrow" data-use="t-tabs"></div>
    <div class="ribbon" data-use="t-home"></div>
    <div class="formula"><span class="name">B5<svg class="mid"><use href="#chevbig"/></svg></span><span data-use="t-formula"></span></div>
    <div class="work">
      <div class="sheet" data-cols="A:714 B:714 C:714 D:136 E:136 F:136 G:136" data-tall="53 53" data-count="22" data-col="B" data-rows="5-5">
        <div class="range h1 teal" data-ref="A1:A1">Total Rows</div>
        <div class="range h1 teal" data-ref="B1:B1">Total Columns</div>
        <div class="range h1 teal" data-ref="C1:C1">Number of Errors</div>
        <div class="range h1 teal" data-ref="A2:A2">0</div>
        <div class="range h1 teal" data-ref="B2:B2">0</div>
        <div class="range h1 teal" data-ref="C2:C2">0</div>
        <div class="range gray chat" data-ref="D3:F17">Chat (Place holder for AI Q&amp;A)</div>
        <div class="range gray notes" data-ref="A19:C21">Status and notes</div>
        <div class="cursor" data-ref="B5:B5"></div>
        <div class="shapes flat"><button>Import Data</button><button>Clean Data</button><button>Run Analysis</button><button>Generate Visualizations</button><button>Export Report</button></div>
      </div>
      <div class="vscroll"></div>
    </div>
  </section>

  <section class="window win-3" data-tab="Start">
    <header class="titlebar"><div class="quick" data-use="t-quick"></div>
      <div class="doc"><span>Blanco_Dashboard_04....</span><span class="where">• Opgeslagen in deze pc</span><svg class="mid"><use href="#chevbig"/></svg></div>
      <div class="search"><svg class="i32"><use href="#lens"/></svg>Zoeken</div><div class="controls" data-use="t-controls"></div></header>
    <div class="tabrow" data-use="t-tabs"></div>
    <div class="ribbon centered" data-use="t-home"></div>
    <div class="formula"><span class="name">D1<svg class="mid"><use href="#chevbig"/></svg></span><span data-use="t-formula"></span></div>
    <div class="work">
      <div class="sheet" data-cols="A:714 B:714 C:714 D:56 E:136 F:136 G:136 H:136" data-tall="53 53" data-col="D" data-rows="1-22">
        <div class="range h1 teal" data-ref="A1:A1">Total Rows</div>
        <div class="range h1 teal" data-ref="B1:B1">Total Columns</div>
        <div class="range h1 teal" data-ref="C1:C1">Number of Errors</div>
        <div class="range h1 teal" data-ref="A2:A2">1027</div>
        <div class="range h1 teal" data-ref="B2:B2">13</div>
        <div class="range h1 teal" data-ref="C2:C2">0</div>
        <div class="range merged" data-ref="A3:C4"></div>
        <div class="range sky" data-ref="A5:A18"></div>
        <div class="range gray" data-ref="B5:C18">VISUALIZATIONS</div>
        <div class="range merged" data-ref="A19:C19"></div>
        <div class="range gray notes" data-ref="A20:C22">Status and notes</div>
        <div class="range lime" data-ref="E1:G3"><svg><use href="#refresh"/></svg></div>
        <div class="range merged" data-ref="E4:G4"></div>
        <div class="range gray" data-ref="E5:G18">Chat GPT</div>
        <div class="range merged" data-ref="E19:G22"></div>
        <div class="range merged" data-ref="D1:D22"></div>
        <div class="cursor" data-ref="D1:D22"></div>
        <div class="shapes flat low"><button>Import Data</button><button>Clean Data</button><button>Run Analysis</button><button>Generate Visualizations</button><button>Export Report</button></div>
      </div>
      <div class="vscroll"></div>
    </div>
    <div class="sheettabs"><svg class="nav"><use href="#prev"/></svg><svg class="nav"><use href="#next"/></svg><span class="tab active"><u>DASHBOARD</u></span><span class="tab other">bike_buyers</span><svg class="add"><use href="#plus"/></svg><span class="grip"><i></i><i></i><i></i></span><span class="hscroll"></span></div>
    <footer class="status" data-use="t-status"></footer>
    <div class="taskbar"><span class="app"></span><span class="tray"></span></div>
  </section>

  <section class="window win-4" data-tab="Ontwikkelaars">
    <header class="titlebar"><div class="quick" data-use="t-quick"></div>
      <div class="doc"><span>Concept03....</span><span class="where">• Opgeslagen in deze pc</span><svg class="mid"><use href="#chevbig"/></svg></div>
      <div class="search"><svg class="i32"><use href="#lens"/></svg>Zoeken</div><div class="controls" data-use="t-controls"></div></header>
    <div class="tabrow" data-use="t-tabs"></div>
    <div class="ribbon">
      <div class="group d-code">
        <div class="body">
          <div class="large vb"><svg><use href="#vb"/></svg>Visual<span>Basic</span></div>
          <div class="large macros"><svg><use href="#macros"/></svg>Macro's</div>
          <div class="stack3"><div><span class="cell w66"><svg class="i32"><use href="#record"/></svg></span></div><div><span class="cell w66"><svg class="i32"><use href="#relref"/></svg></span></div><div><span class="cell w66"><svg class="i32"><use href="#warn"/></svg></span></div></div>
        </div>
        <div class="label">Programmacode</div>
      </div>
      <div class="group d-addins">
        <div class="body">
          <div class="large"><svg><use href="#hexes"/></svg>Invoegtoepassingen</div>
          <div class="large"><svg><use href="#gear"/></svg>Excel-<span>invoegtoepassingen</span></div>
          <div class="large"><svg><use href="#com"/></svg>COM-<span>invoegtoepassingen</span></div>
        </div>
        <div class="label">Invoegtoepassingen</div>
      </div>
      <div class="group d-controls">
        <div class="body">
          <div class="large ins"><svg><use href="#toolbox"/></svg>Invoegen<svg class="chev"><use href="#chev"/></svg></div>
          <div class="large design"><svg><use href="#ruler"/></svg>Ontwerpmodus</div>
          <div class="stack3 list"><div><svg class="i32"><use href="#props"/></svg>Eigenschappen</div><div><svg class="i32"><use href="#viewcode"/></svg>Programmacode weergeven</div><div><svg class="i32"><use href="#dialog"/></svg>Dialoogvenster openen</div></div>
        </div>
        <div class="label">Besturingselementen</div>
      </div>
      <div class="group d-xml">
        <div class="body">
          <div class="large source"><svg><use href="#source"/></svg>Bron</div>
          <div class="stack3 list maps"><div class="off"><svg class="i32"><use href="#mapprops"/></svg>Eigenschappen toewijzen</div><div><svg class="i32"><use href="#expansion"/></svg>Uitbreidingspakketten</div><div class="off"><svg class="i32"><use href="#xmldoc"/></svg>Gegevens vernieuwen</div></div>
          <div class="stack3 list"><div><svg class="i32"><use href="#import"/></svg>Importeren</div><div class="off"><svg class="i32"><use href="#export"/></svg>Exporteren</div></div>
        </div>
        <div class="label">XML</div>
      </div>
      <svg class="collapse"><use href="#chevbig"/></svg>
    </div>
    <div class="formula"><span class="name">I14<svg class="mid"><use href="#chevbig"/></svg></span><span data-use="t-formula"></span></div>
    <div class="work">
      <div class="sheet quiet" data-cols="A:454 B:82 C:478 D:714 E:82 F:136 G:136 H:136 I:136 J:136 K:136 L:136" data-tall="56 56" data-col="I" data-rows="14-14">
        <div class="range h1 ice" data-ref="C1:C1">Total Rows</div>
        <div class="range h1 ice" data-ref="D1:D1">Total Columns</div>
        <div class="range h1 merged" data-ref="C2:C2">0</div>
        <div class="range h1 merged" data-ref="D2:D2">0</div>
        <div class="range merged" data-ref="C3:D3"></div>
        <div class="range merged" data-ref="E1:E17"></div>
        <div class="range merged" data-ref="F3:H3"></div>
        <div class="range ice" data-ref="A4:A17"></div>
        <div class="range merged" data-ref="B4:B17"></div>
        <div class="range gray strong" data-ref="C4:D17">SIMPLE VISUALISATION</div>
        <div class="range gray strong" data-ref="F4:H17">Chat GPT Q&amp;A</div>
        <div class="range merged" data-ref="A18:H18"></div>
        <div class="range gray strong" data-ref="A19:D21">Status and Notes</div>
        <div class="range merged" data-ref="F19:H21"></div>
        <div class="cursor" data-ref="I14:I14"></div>
        <div class="banner"><svg><use href="#banner"/></svg><b>DASHBOARD</b></div>
        <div class="shapes glossy"><button>Import Data</button><button>Clean Data Rows</button><button>Clean Data Columns</button><button>Replace Data</button><button>Add Data</button><button>Run Analysis</button><button>Generate Visualizations</button><button class="export">Export Data</button></div>
        <button class="pill refresh"><svg><use href="#refresh"/></svg>REFRESH DATA</button>
        <button class="pill revert"><svg><use href="#undo3d"/></svg>UNDO LAST ACTION</button>
      </div>
      <div class="vscroll"></div>
    </div>
    <div class="sheettabs"><svg class="nav"><use href="#prev"/></svg><svg class="nav"><use href="#next"/></svg><span class="tab active"><u>Dashboard</u></span><svg class="add"><use href="#plus"/></svg><span class="grip"><i></i><i></i><i></i></span><span class="hscroll wide"></span></div>
    <footer class="status" data-use="t-status"></footer>
  </section>

</main>
<script src="script.js"></script>
</body>
</html>
```
FILE: styles.css
```css
* { box-sizing: border-box; }
body { margin: 0; background: #fff; overflow: hidden; }
button { font: inherit; color: inherit; border: 0; padding: 0; margin: 0; background: none; }
svg { display: block; flex: none; overflow: visible; }
.sprites { position: absolute; width: 0; height: 0; }

.desktop {
  position: relative;
  width: 5440px;
  height: 3104px;
  overflow: hidden;
  zoom: 0.752941;
  font: 22.6px/1 "Open Sans", "Noto Sans", sans-serif;
  background: #fff;
}

.window {
  position: absolute;
  isolation: isolate;
  width: 2728px;
  overflow: hidden;
  background: #515151;
  color: #fff;
  display: flex;
  flex-direction: column;
}
.win-1 { left: -3px; top: -6px; height: 1747px; }
.win-2 { left: 2700px; top: -9px; width: 2683px; height: 1309px; }
.win-2 > * { width: 2728px; }
.win-3 { left: 15.500px; top: 1292px; height: 1751px; width: 2729px; }
.win-4 { left: 2745px; top: 1300px; height: 1737px; box-shadow: 0 0 0 1px #2a2a2a; }

/* shared bits */
.i16 { width: 16px; height: 16px; }
.i20 { width: 20px; height: 20px; }
.i24 { width: 24px; height: 24px; }
.i28 { width: 28px; height: 28px; }
.i32 { width: 32px; height: 32px; }
.chev { width: 14px; height: 10px; }
.mid { width: 20px; height: 13px; }
.cell { display: flex; align-items: center; justify-content: center; flex: none; }
.w16 { width: 16px; } .w20 { width: 20px; } .w24 { width: 24px; } .w27 { width: 27px; }
.w28 { width: 28px; } .w29 { width: 29px; } .w36 { width: 36px; } .w38 { width: 38px; }
.w42 { width: 42px; } .w48 { width: 48px; } .w51 { width: 51px; } .w52 { width: 52px; }
.w54 { width: 54px; } .w56 { width: 56px; } .w60 { width: 60px; } .w66 { width: 66px; }

/* title bar */
.titlebar { height: 87px; flex: none; display: flex; align-items: center; }
.quick { display: flex; align-items: center; padding-left: 24px; width: 689px; flex: none; }
.excel { width: 32px; height: 32px; margin-right: 32px; }
.autosave { width: 208px; font-size: 20px; white-space: nowrap; padding-top: 2px; }
.toggle { width: 83px; height: 40px; border: 2px solid #a8a8a8; border-radius: 20px; background: #5d5d5d; display: flex; align-items: center; padding-left: 3px; }
.toggle::before { content: ""; width: 28px; height: 28px; border-radius: 50%; background: #fff; }
.save { margin-left: 22px; }
.undo { margin-left: 25px; }
.redo { margin-left: 9px; }
.win-1 .redo, .win-1 .redo-chev, .win-3 .redo, .win-3 .redo-chev, .win-4 .redo, .win-4 .redo-chev { opacity: .22; }
.doc { display: flex; align-items: center; flex: none; font-size: 23.100px; white-space: nowrap; }
.doc span { padding-top: 2px; }
.doc .where { margin-left: 20px; }
.doc .mid { margin-left: 9px; }
.doc .far { margin-left: 18px; }
.win-1 .doc { width: 597px; }
.win-2 .doc { width: 359px; }
.win-3 .doc { width: 632px; }
.win-4 .doc { width: 516px; }
.search { width: 735px; height: 64px; border: 2px solid #808080; border-bottom-width: 3px; border-radius: 8px; background: #bdbdbd; color: #4a4a4a; display: flex; align-items: center; padding-left: 24px; font-size: 25.400px; flex: none; box-shadow: 0 3px 4px rgba(0,0,0,.3); }
.search svg { margin-right: 26px; color: #333; }
.controls { margin-left: auto; display: flex; align-items: center; }
.win-3 .controls { padding-right: 1px; }
.avatar { width: 48px; height: 48px; margin-right: 24px; }
.bulb { width: 90px; }
.wc { width: 96px; }

/* tab row */
.tabrow { height: 64px; flex: none; display: flex; align-items: center; padding: 8px 24px 0 8px; font-size: 25.400px; }
.tabs { display: grid; grid-template-columns: 117px 98px 149px 137px 227px 148px 156px 180px 106px 205px 96px 300px; flex: 1; justify-items: start; }
.tabs a { height: 46px; line-height: 46px; white-space: nowrap; position: relative; }
.tabs a.current { font-weight: 700; letter-spacing: -.04em; }
.tabs a.current::after { content: ""; position: absolute; left: 0; right: 0; bottom: 1px; height: 4px; border-radius: 2px; background: #9fd8ba; }
.comments, .share { height: 48px; border-radius: 6px; display: flex; align-items: center; margin-top: -4px; color: #262626; }
.comments { width: 215px; background: #bdbdbd; border: 2px solid #888; padding-left: 8px; margin-right: 16px; }
.comments svg { margin-right: 8px; }
.share { width: 144px; background: #5fbd82; padding-left: 10px; }
.share svg:first-child { margin-right: 9px; }
.share .chev { margin-left: 9px; }

/* ribbon */
.ribbon { height: 200px; flex: none; width: 2703px; margin-left: 8px; border-radius: 14px; background: #bdbdbd; padding: 10px 0 12px; display: flex; color: #262626; box-shadow: 0 4px 6px rgba(0,0,0,.35); }
.win-2 .ribbon { width: 2703px; }
.group { display: grid; grid-template-rows: 160px 18px; border-right: 2px solid #8c8c8c; flex: none; }
.label { font-size: 19.900px; line-height: 16px; text-align: center; position: relative; white-space: nowrap; padding-right: 30px; color: #333; }
.label svg { position: absolute; right: 6px; top: 2px; width: 14px; height: 15px; }
.g-clip .label { padding-right: 24px; }
.g-styles .label, .g-cells .label, .g-edit .label, .g-addins .label, .d-code .label, .d-addins .label, .d-controls .label, .d-xml .label { padding-right: 0; }
.body { display: flex; align-items: flex-start; }
.stack3 { display: grid; grid-auto-rows: 52px; margin-top: -4px; }
.stack2 { display: grid; grid-auto-rows: 63px; margin-top: 6px; }
.stack3 > div, .stack2 > div { display: flex; align-items: center; white-space: nowrap; }
.list > div > .i32 { margin-right: 8px; }
.list > div > .chev { margin-left: 7px; }
.list > .split > .chev { margin-left: 25px; }
.large { display: flex; flex-direction: column; align-items: center; padding-top: 5px; line-height: 32.500px; white-space: nowrap; }
.large > svg:first-child { width: 64px; height: 64px; margin-bottom: 4px; }
.large > .chev { margin-top: 11px; }
.large span { display: flex; align-items: center; }
.large span .chev { margin-left: 7px; }
.select { display: flex; align-items: center; justify-content: space-between; height: 47px; border: 2px solid #6b6b6b; border-radius: 6px; padding: 0 5px 0 3px; font-size: 22.600px; }
.collapse { width: 22px; height: 14px; margin: 156px 18px 0 auto; color: #333; }
.bar { width: 2px; height: 48px; background: #969696; margin-left: 8px; }
.bar.first { margin-left: 7px; }

.g-clip { width: 214px; }
.g-font { width: 472.500px; }
.g-align { width: 394px; }
.g-number { width: 214px; }
.g-styles { width: 380px; }
.g-cells { width: 254px; }
.g-edit { width: 395px; }
.g-addins { width: 256px; }
.paste { width: 128px; padding-left: 6px; }
.paste-off .paste { color: #7f7f7f; }
.paste-off .paste svg:first-child { filter: grayscale(1); opacity: .6; }
.face { width: 229px; margin-right: 6px; }
.size { width: 99px; }
.g-font .stack2 { padding-left: 16px; }
.pickers { padding-left: 2px; }
.marks b, .marks i, .marks u { font-size: 27px; color: #444; }
.marks i { font-family: "Liberation Serif", serif; font-size: 31px; }
.fc { margin-left: 6px; }
.aligns { padding-left: 14.500px; width: 284px; }
.divider { width: 2px; height: 124px; margin-top: 12px; background: #969696; }
.merges { padding-left: 11px; }
.merge { width: 79px; height: 47px; justify-content: flex-start; padding-left: 7px; border-radius: 8px; border: 2px solid transparent; }
.merge .chev { margin-left: 14px; }
.v-bot, .h-mid, .v-mid { height: 47px; position: relative; }
.ribbon:not(.centered) .v-bot::before, .centered .v-mid::before, .centered .h-mid::before { content: ""; position: absolute; inset: 0 2px; border: 2px solid #808080; border-radius: 8px; background: #cbcbcb; }
.v-bot svg, .h-mid svg, .v-mid svg { position: relative; }
.centered .merge { border-color: #808080; background: #cbcbcb; }
.g-number .stack3 { padding-left: 16.500px; }
.kind { width: 181px; font-size: 22px; }
.percent { font-size: 31px; font-weight: 300; color: #444; }
.g-styles .stack3 { padding-left: 24px; }
.g-cells .stack3 { padding-left: 24.500px; }
.g-edit .stack3 { padding-left: 13.500px; }
.sort { width: 140px; margin-left: 9px; }
.find { width: 142px; }
.g-addins .large { width: 100%; }

.d-code { width: 270.500px; }
.d-code .body { padding-left: 13.500px; }
.vb { width: 104px; }
.macros { width: 81px; }
.d-addins { width: 712px; }
.d-addins .body { padding-left: 15.500px; }
.d-addins .large { width: 227.500px; }
.d-controls { width: 687px; }
.d-controls .body { padding-left: 21px; }
.ins { width: 100px; }
.design { width: 190px; }
.d-controls .stack3 { padding-left: 6px; }
.d-xml { width: 643.500px; }
.d-xml .body { padding-left: 13.500px; }
.source { width: 90px; }
.maps { width: 348px; padding-left: 9.500px; }
.off { color: #838383; }
.off svg { opacity: .55; }

/* formula bar */
.formula { height: 74px; flex: none; padding: 16px 0 0 8px; display: flex; align-items: flex-start; color: #fff; }
.formula > [data-use] { display: flex; flex: 1; }
.name, .fx, .entry { height: 44px; border: 1.500px solid #818181; border-radius: 8px; background: #4b4b4b; display: flex; align-items: center; }
.name { width: 201.500px; justify-content: space-between; padding: 0 9px 0 6px; font-size: 24px; }
.formula .mid { color: #ddd; }
.dots { width: 40.500px; height: 44px; display: flex; flex-direction: column; align-items: center; justify-content: center; gap: 5px; }
.dots i, .grip i { width: 4px; height: 4px; background: #ddd; }
.fx { width: 169px; margin-right: 9px; }
.fx em { font: italic 34px "Liberation Serif", serif; }
.tick { width: 32px; height: 24px; }
.dim { color: #8c8c8c; }
.entry { width: 2283px; justify-content: flex-end; padding-right: 9px; }

/* worksheet */
.work { height: 1206px; flex: none; display: flex; }
.sheet { width: 2690px; height: 1206px; flex: none; display: grid; position: relative; overflow: hidden; background: #fff; color: #000; font: 25.600px/1 Roboto, "Open Sans", sans-serif; }
.colhead, .rowhead, .corner { background: #515151; color: #fff; font-family: "Open Sans", sans-serif; z-index: 4; }
.colhead { border-right: 1.500px solid #9b9b9b; border-bottom: 2px solid #9b9b9b; text-align: center; line-height: 40px; font-size: 25px; }
.rowhead { border-right: 1.500px solid #9b9b9b; border-bottom: 2px solid #b5b5b5; font-size: 24.500px; display: flex; align-items: flex-end; justify-content: center; padding-right: 8px; line-height: 36px; }
.colhead.on { background: #656565; border-bottom: 3px solid #217346; }
.rowhead.on { background: #656565; border-right: 3px solid #217346; padding-right: 6.500px; }
.quiet .on { background: #515151; }
.corner { border-right: 1.500px solid #9b9b9b; border-bottom: 2px solid #9b9b9b; }
.corner::before { content: ""; display: block; margin: 4px 0 0 12px; width: 31px; height: 30px; background: #efefef; clip-path: polygon(100% 0, 100% 100%, 0 100%); }
.vline { border-right: 1.500px solid #dedede; }
.hline { border-bottom: 1.500px solid #dadada; }
.range { z-index: 1; display: flex; align-items: center; justify-content: center; white-space: nowrap; min-width: 0; min-height: 0; overflow: visible; }
.h1 { font-size: 39.300px; font-weight: 700; padding-top: 5px; }
.teal { background: #0d769f; color: #fff; }
.gray { background: #d9d9d9; }
.sky { background: #83cdee; }
.ice { background: #caedfb; }
.lime { background: #b5e6a2; }
.lime svg { width: 120px; height: 136px; margin-top: 6px; }
.merged { background: #fff; border-right: 1.500px solid #dedede; border-bottom: 1.500px solid #dadada; }
.chat { align-items: flex-start; justify-content: flex-start; padding: 8px 0 0 5px; }
.notes { font-size: 34px; font-style: italic; padding: 3px 6px 0 0; }
.strong { font-weight: 700; font-style: italic; padding: 1px 4px 0 0; }
.cursor { z-index: 2; border: 3px solid #217346; margin: -2px -1px -1px -2px; position: relative; }
.cursor::after { content: ""; position: absolute; right: -5px; bottom: -5px; width: 8px; height: 8px; background: #217346; outline: 1.500px solid #fff; }

/* macro buttons floating over the cells */
.shapes { position: absolute; z-index: 3; display: flex; flex-direction: column; }
.plain { left: 87px; top: 123px; gap: 37.500px; font-size: 32.500px; }
.plain button { background: #f0f0f0; height: 77px; width: 583px; border-right: 3px solid #a5a5a5; border-bottom: 3px solid #a5a5a5; padding-top: 5px; }
.plain button:nth-child(1) { width: 592px; height: 81px; margin-left: 5px; margin-bottom: -2px; }
.plain button:nth-child(2) { width: 586px; margin-left: 6px; }
.plain button:nth-child(3) { width: 576px; margin-left: 9px; }
.plain button:nth-child(5) { margin-left: 3px; }
.flat { left: 102px; top: 185px; gap: 43px; font-size: 26.500px; color: #fff; }
.flat button { width: 592px; height: 71px; border-radius: 12px; border: 4px solid #042433; background: #156082; padding-top: 2px; }
.flat button:first-child { margin-left: 4px; }
.low { top: 223px; }
.glossy { left: 65px; top: 203px; gap: 5.700px; font-size: 27px; font-weight: 700; color: #fff; }
.glossy button { width: 416px; height: 46px; border: 4px solid #04263a; border-radius: 9px; background: linear-gradient(#0b6c95, #129ad4 55%, #55c2ee); padding-top: 1px; }
.glossy button:nth-child(2), .glossy button:nth-child(6) { margin-left: 1px; }
.glossy button:nth-child(3) { margin-left: -1px; }
.glossy .export { width: 414px; height: 96px; margin: 40px 0 0 3px; border-radius: 18px; font-size: 33.700px; background: radial-gradient(ellipse 56% 190% at 50% 115%, #7ad0f3 0, #13a8e4 50%, #0a5f83 100%); }
.banner { position: absolute; z-index: 3; left: 50px; top: 40px; width: 436px; height: 106px; display: flex; align-items: center; justify-content: center; font-size: 33px; color: #fff; }
.banner svg { position: absolute; inset: 0; width: 436px; height: 106px; }
.banner b { position: relative; padding-left: 2px; }
.pill { position: absolute; z-index: 3; height: 88px; border: 4px solid #04263a; border-radius: 16px; color: #fff; font-weight: 700; font-size: 25.500px; display: flex; align-items: center; background: radial-gradient(ellipse 56% 190% at 50% 115%, #a9e094 0, #52b032 50%, #2d671b 100%); white-space: nowrap; padding: 2px 0 0; }
.pill.refresh { left: 1878px; top: 49px; width: 362px; padding-left: 35px; }
.pill.refresh svg { width: 57px; height: 65px; margin-right: 42px; }
.pill.revert { left: 1880px; top: 770px; width: 363px; padding-left: 12px; }
.pill.revert svg { width: 62px; height: 60px; margin-right: 22px; }

/* scroll bars */
.vscroll { width: 32px; height: 1209px; margin-left: 2px; border-radius: 16px; background: #3b3b3b; display: flex; flex-direction: column; align-items: center; padding-top: 11px; position: relative; z-index: 5; flex: none; }
.vscroll::before { content: ""; width: 20px; height: 1162px; background:
  linear-gradient(#c8c8c8, #c8c8c8) center 0 / 20px 14px no-repeat,
  linear-gradient(#c8c8c8, #c8c8c8) center 25px / 16px 1137px no-repeat;
  clip-path: polygon(50% 0, 100% 14px, 100% 20px, 90% 28px, 90% 1156px, 70% 100%, 30% 100%, 10% 1156px, 10% 28px, 0 20px, 0 14px); }
.vscroll::after { content: ""; width: 20px; height: 13px; margin-top: 12px; background: #c8c8c8; clip-path: polygon(0 0, 100% 0, 50% 100%); }
.hscroll { width: 1017px; height: 34px; border-radius: 17px; display: flex; align-items: center; justify-content: space-between; padding: 0 9px; margin-right: 37px; flex: none; background: linear-gradient(#c8c8c8, #c8c8c8) 33px center / 869px 16px no-repeat, #3b3b3b; }
.hscroll::before { content: ""; width: 14px; height: 18px; background: #c8c8c8; clip-path: polygon(100% 0, 100% 100%, 0 50%); }
.hscroll::after { content: ""; width: 14px; height: 18px; background: #c8c8c8; clip-path: polygon(0 0, 0 100%, 100% 50%); }
.hscroll.wide { background-size: 907px 16px, auto; }

/* sheet tabs */
.sheettabs { height: 64px; flex: none; display: flex; align-items: center; padding-left: 33px; border-top: 1px solid #3f3f3f; }
.nav { width: 12px; height: 20px; color: #aaa; }
.nav + .nav { margin-left: 54px; }
.tab { white-space: nowrap; }
.tab.active { margin-left: 92px; align-self: flex-start; height: 56px; padding: 0 17px; margin-top: -1px; background: #fff; color: #222; border-radius: 0 0 8px 8px; font-size: 26px; text-align: center; }
.tab.active u { display: block; text-decoration: none; border-bottom: 4px solid #1e7145; height: 50px; line-height: 53px; }
.win-3 .tab.active { width: 204px; }
.win-4 .tab.active { width: 177px; }
.tab.other { margin-left: 4px; border: solid #8a8a8a; border-width: 0 1.500px; padding: 0 28px; height: 36px; line-height: 35px; font-size: 25.500px; width: 202px; }
.add { width: 22px; height: 22px; margin-left: 84px; color: #ccc; }
.grip { margin-left: auto; margin-right: 31px; display: flex; flex-direction: column; gap: 5px; }

/* status bar */
.status { height: 44px; flex: none; border-top: 2px solid #3d3d3d; display: flex; align-items: center; padding-left: 13px; font-size: 20px; white-space: nowrap; }
.ready { width: 102px; letter-spacing: -.03em; }
.rec { margin-right: 37px; }
.acc { margin-right: 8px; }
.status b { letter-spacing: -.035em; width: 1640px; }
.vset { margin-right: 7px; }
.vtext { width: 241px; letter-spacing: -.02em; }
.view { width: 78px; height: 100%; margin-right: 2.500px; }
.view.on { background: #5d5d5d; }
.minus { width: 16px; height: 2px; background: #ddd; margin: 0 10px 0 11px; }
.slider { width: 199px; height: 22px; background: linear-gradient(#c4c4c4, #c4c4c4) center / 8px 22px no-repeat, linear-gradient(#c4c4c4, #c4c4c4) center / 100% 2px no-repeat; }
.zoomin { width: 16px; height: 16px; margin: 0 27px 0 9px; }
.pct { letter-spacing: -.05em; }

.taskbar { flex: 1; background: #1d1d1d; display: flex; }
.app { margin-left: 88px; width: 576px; background: #f2f2f2; border-top: 2px solid #bdbdbd; }
.tray { margin-left: 1317px; width: 72px; background: #505050; }
```
FILE: script.js
```js
// Fill in the parts that every window shares
document.querySelectorAll('[data-use]').forEach(function (el) {
  el.appendChild(document.getElementById(el.dataset.use).content.cloneNode(true));
});

document.querySelectorAll('.window').forEach(function (win) {
  win.querySelectorAll('.tabs a').forEach(function (tab) {
    if (tab.textContent === win.dataset.tab) tab.classList.add('current');
  });
});

// Build headers and grid lines, and place ranges by their A1 references
document.querySelectorAll('.sheet').forEach(function (sheet) {
  var count = +(sheet.dataset.count || 30);
  var cols = sheet.dataset.cols.split(' ').map(function (c) { return c.split(':'); });
  var tall = sheet.dataset.tall.split(' ');
  var marked = sheet.dataset.rows.split('-').map(Number);
  var letters = cols.map(function (c) { return c[0]; });

  sheet.style.gridTemplateColumns = '45.5px ' + cols.map(function (c) { return c[1] + 'px'; }).join(' ');
  sheet.style.gridTemplateRows = '38px ' + tall.map(function (h) { return h + 'px'; }).join(' ') +
    ' repeat(' + (count - tall.length) + ', 38px)';

  function add(cls, row, col, text) {
    var el = document.createElement('div');
    el.className = cls;
    el.style.gridRow = row;
    el.style.gridColumn = col;
    if (text) el.textContent = text;
    sheet.appendChild(el);
  }

  add('corner', 1, 1);
  letters.forEach(function (letter, i) {
    add('colhead' + (letter === sheet.dataset.col ? ' on' : ''), 1, i + 2, letter);
    add('vline', '2 / -1', i + 2);
  });
  for (var r = 1; r <= count; r++) {
    add('rowhead' + (r >= marked[0] && r <= marked[1] ? ' on' : ''), r + 1, 1, String(r));
    add('hline', r + 1, '2 / -1');
  }

  sheet.querySelectorAll('[data-ref]').forEach(function (el) {
    var m = el.dataset.ref.match(/([A-Z])(\d+):([A-Z])(\d+)/);
    el.style.gridArea = [+m[2] + 1, letters.indexOf(m[1]) + 2, +m[4] + 2, letters.indexOf(m[3]) + 3].join(' / ');
  });
});
```
